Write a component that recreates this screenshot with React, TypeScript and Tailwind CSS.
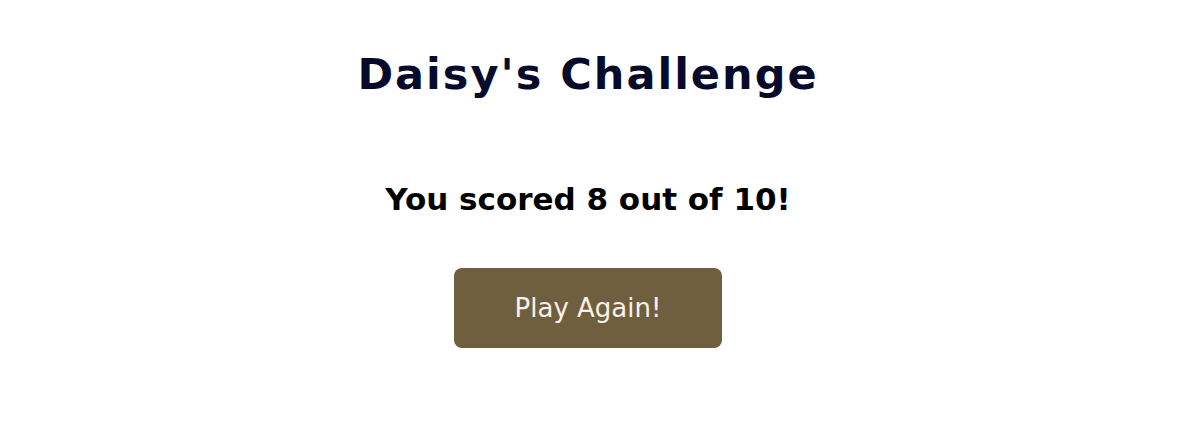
export default function App() {
  return (
    <div className="min-h-[423px] bg-white flex flex-col items-center pr-[5px] font-['DejaVu_Sans','Inter',sans-serif]">
      <h1 className="mt-[46px] text-[43px] leading-[56px] font-bold tracking-[2px] text-[#070b2b]">
        Daisy&apos;s Challenge
      </h1>
      <p className="mt-[75px] text-[31px] leading-[44px] font-bold text-black">
        You scored 8 out of 10!
      </p>
      <button className="mt-[47px] w-[268px] h-[80px] rounded-lg bg-[#6f5f3f] text-[26px] text-[#f7f2ea] font-normal">
        Play Again!
      </button>
    </div>
  );
}
